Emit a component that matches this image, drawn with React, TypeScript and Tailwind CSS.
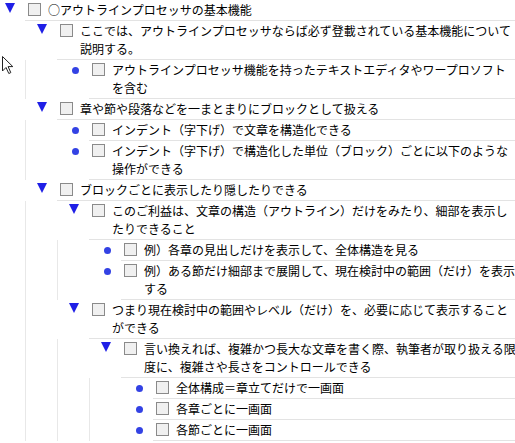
type Node = {
  text: string;
  children?: Node[];
};

// line breaks follow the wrapping seen in the original window
const tree: Node = {
  text: "○アウトラインプロセッサの基本機能",
  children: [
    {
      text: "ここでは、アウトラインプロセッサならば必ず登載されている基本機能について\n説明する。",
      children: [
        { text: "アウトラインプロセッサ機能を持ったテキストエディタやワープロソフト\nを含む" },
      ],
    },
    {
      text: "章や節や段落などを一まとまりにブロックとして扱える",
      children: [
        { text: "インデント（字下げ）で文章を構造化できる" },
        { text: "インデント（字下げ）で構造化した単位（ブロック）ごとに以下のような\n操作ができる" },
      ],
    },
    {
      text: "ブロックごとに表示したり隠したりできる",
      children: [
        {
          text: "このご利益は、文章の構造（アウトライン）だけをみたり、細部を表示し\nたりできること",
          children: [
            { text: "例）各章の見出しだけを表示して、全体構造を見る" },
            { text: "例）ある節だけ細部まで展開して、現在検討中の範囲（だけ）を表示\nする" },
          ],
        },
        {
          text: "つまり現在検討中の範囲やレベル（だけ）を、必要に応じて表示すること\nができる",
          children: [
            {
              text: "言い換えれば、複雑かつ長大な文章を書く際、執筆者が取り扱える限\n度に、複雑さや長さをコントロールできる",
              children: [
                { text: "全体構成＝章立てだけで一画面" },
                { text: "各章ごとに一画面" },
                { text: "各節ごとに一画面" },
              ],
            },
          ],
        },
      ],
    },
  ],
};

function Toggle({ open }: { open: boolean }) {
  if (open) {
    return (
      <svg width="10" height="10" viewBox="0 0 10 10" className="mt-[3px] ml-[5px]">
        <polygon points="0,0 10,0 5,10" fill="#1f1fe6" />
      </svg>
    );
  }
  return <span className="mt-[7px] ml-[8px] block w-[7px] h-[7px] rounded-full bg-[#3342e4]" />;
}

function OutlineItem({ node, depth }: { node: Node; depth: number }) {
  const hasKids = !!node.children?.length;
  return (
    <li>
      <div className="flex">
        <div className="w-[25px] shrink-0 flex items-start">
          <Toggle open={hasKids} />
        </div>
        <div className="flex-1 min-w-0 flex items-start pl-[3px] py-px border-b border-[#e3e3e3]">
          <span className="mt-[2px] w-[13px] h-[13px] shrink-0 border border-[#8a8a8a] bg-[#f0f0f0]" />
          <span className="ml-[7px] whitespace-pre leading-[18px] text-[12px] text-black">{node.text}</span>
        </div>
      </div>
      {hasKids && (
        <ul
          className={
            depth === 0
              ? "pl-[32px]"
              : "ml-[-7px] pl-[38px] border-l border-[#e8e8e8]"
          }
        >
          {node.children!.map((c, i) => (
            <OutlineItem key={i} node={c} depth={depth + 1} />
          ))}
        </ul>
      )}
    </li>
  );
}

export default function App() {
  return (
    <div className="relative w-[515px] h-[443px] overflow-hidden bg-white font-['Noto_Sans_CJK_JP','Noto_Sans',sans-serif]">
      <ul className="w-[518px]">
        <OutlineItem node={tree} depth={0} />
      </ul>

      {/* mouse pointer left on the screen */}
      <svg width="13" height="20" viewBox="0 0 13 20" className="absolute left-[1px] top-[55px]">
        <path
          d="M1.5 1.5 L1.5 16 L5 12.5 L7.8 18.5 L9.8 17.6 L7.1 11.6 L11.8 11.6 Z"
          fill="#fff"
          stroke="#222"
          strokeWidth="1"
          strokeLinejoin="miter"
        />
      </svg>
    </div>
  );
}
